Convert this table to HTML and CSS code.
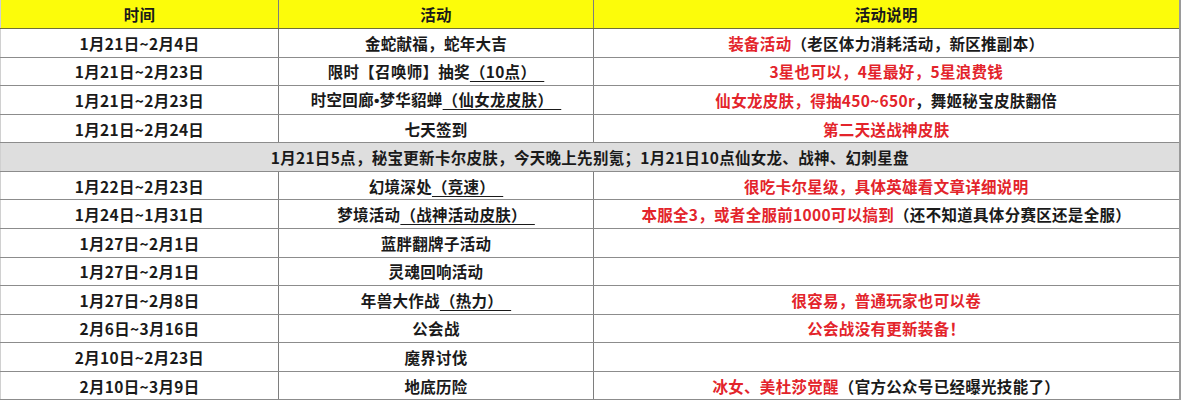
FILE: index.html
```html
<!DOCTYPE html>
<html lang="zh-CN">
<head>
<meta charset="utf-8">
<title>活动时间表</title>
<link rel="stylesheet" href="styles.css">
</head>
<body>
<table class="sched">
  <colgroup>
    <col class="c-time">
    <col class="c-act">
    <col class="c-desc">
  </colgroup>
  <thead>
    <tr class="head">
      <th>时间</th>
      <th>活动</th>
      <th>活动说明</th>
    </tr>
  </thead>
  <tbody>
    <tr>
      <td>1月21日~2月4日</td>
      <td>金蛇献福，蛇年大吉</td>
      <td><span class="red">装备活动</span>（老区体力消耗活动，新区推副本）</td>
    </tr>
    <tr>
      <td>1月21日~2月23日</td>
      <td>限时【召唤师】抽奖<span class="ul">（10点）&ensp;</span></td>
      <td><span class="red">3星也可以，4星最好，5星浪费钱</span></td>
    </tr>
    <tr>
      <td>1月21日~2月23日</td>
      <td>时空回廊<span class="dot">•</span>梦华貂蝉<span class="ul">（仙女龙皮肤）&ensp;</span></td>
      <td><span class="red">仙女龙皮肤，得抽450~650r</span>，舞姬秘宝皮肤翻倍</td>
    </tr>
    <tr>
      <td>1月21日~2月24日</td>
      <td>七天签到</td>
      <td><span class="red">第二天送战神皮肤</span></td>
    </tr>
    <tr class="note">
      <td colspan="3">1月21日5点，秘宝更新卡尔皮肤，今天晚上先别氪；1月21日10点仙女龙、战神、幻刺星盘</td>
    </tr>
    <tr>
      <td>1月22日~2月23日</td>
      <td>幻境深处<span class="ul">（竞速）&ensp;</span></td>
      <td><span class="red">很吃卡尔星级，具体英雄看文章详细说明</span></td>
    </tr>
    <tr>
      <td>1月24日~1月31日</td>
      <td>梦境活动<span class="ul">（战神活动皮肤）&ensp;</span></td>
      <td><span class="red">本服全3，或者全服前1000可以搞到</span>（还不知道具体分赛区还是全服）</td>
    </tr>
    <tr>
      <td>1月27日~2月1日</td>
      <td>蓝胖翻牌子活动</td>
      <td></td>
    </tr>
    <tr>
      <td>1月27日~2月1日</td>
      <td>灵魂回响活动</td>
      <td></td>
    </tr>
    <tr>
      <td>1月27日~2月8日</td>
      <td>年兽大作战<span class="ul">（热力）&ensp;</span></td>
      <td><span class="red">很容易，普通玩家也可以卷</span></td>
    </tr>
    <tr>
      <td>2月6日~3月16日</td>
      <td>公会战</td>
      <td><span class="red">公会战没有更新装备！</span></td>
    </tr>
    <tr>
      <td>2月10日~2月23日</td>
      <td>魔界讨伐</td>
      <td></td>
    </tr>
    <tr>
      <td>2月10日~3月9日</td>
      <td>地底历险</td>
      <td><span class="red">冰女、美杜莎觉醒</span>（官方公众号已经曝光技能了）</td>
    </tr>
  </tbody>
</table>
</body>
</html>
```

FILE: styles.css
```css
html, body {
  margin: 0;
  padding: 0;
  background: #ffffff;
}

.sched {
  border-collapse: collapse;
  table-layout: fixed;
  width: 1179px;
  font-family: "Noto Sans CJK SC", "Noto Sans", sans-serif;
  font-weight: 700;
  font-size: 15.5px;
  letter-spacing: 0.3px;
  color: #1a1a1a;
  border-left: 1px solid #d0d0d0;
  border-right: 2px solid #9a9a9a;
}

.c-time { width: 278px; }
.c-act { width: 315px; }
.c-desc { width: 586px; }

.sched tr {
  height: 28.57px;
}

.sched th,
.sched td {
  padding: 0;
  text-align: center;
  vertical-align: middle;
  line-height: 20px;
  white-space: nowrap;
  border-top: 1px solid #8c8c8c;
  border-bottom: 1px solid #8c8c8c;
  border-left: 1px solid #7e7e7e;
  border-right: 1px solid #7e7e7e;
}

.sched th:first-child,
.sched td:first-child {
  border-left: 1px solid #d0d0d0;
}

.sched th:last-child,
.sched td:last-child {
  border-right: 2px solid #9a9a9a;
}

.head th {
  background: #fcfc0a;
  font-weight: 700;
  border-top: none;
  border-bottom: 1px solid #6e6e3a;
}

.note td {
  background: #dedede;
}

.red {
  color: #e3242b;
}

.dot {
  font-family: "Liberation Sans", sans-serif;
  letter-spacing: 0;
}

.ul {
  text-decoration: underline;
  text-decoration-thickness: 1px;
  text-underline-offset: 3px;
}
```
